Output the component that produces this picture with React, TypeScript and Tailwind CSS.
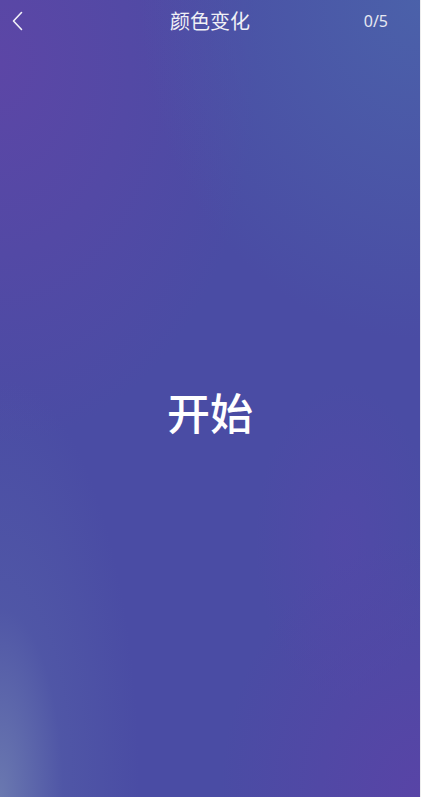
export default function App() {
  return (
    <div className="flex h-[797px] w-[421px] bg-[#ececec] font-['Noto_Sans','Noto_Sans_CJK_SC',sans-serif]">
      <div className="flex h-full w-[420px] flex-col bg-[#4a4ca4] bg-[radial-gradient(ellipse_140px_420px_at_0%_100%,rgba(112,128,178,0.85),rgba(90,105,170,0.35)_45%,transparent),radial-gradient(ellipse_280px_340px_at_100%_0%,rgba(75,98,170,0.95),transparent),radial-gradient(ellipse_260px_380px_at_0%_8%,rgba(92,70,166,1),transparent),radial-gradient(ellipse_200px_260px_at_100%_100%,rgba(88,68,166,1),transparent),radial-gradient(ellipse_90px_160px_at_82%_68%,rgba(84,72,168,0.7),transparent)]">
        <header className="relative flex h-[42px] shrink-0 items-center justify-between pl-[12px] pr-[32px]">
          <button className="flex h-[20px] w-[12px] items-center">
            <svg width="11" height="20" viewBox="0 0 11 20" fill="none">
              <path d="M9.5 1.5L1.5 10L9.5 18.5" stroke="#f2f2f8" strokeWidth="1.6" strokeLinecap="round" strokeLinejoin="round" />
            </svg>
          </button>
          <h1 className="absolute left-1/2 -translate-x-1/2 font-['Noto_Sans_CJK_SC',sans-serif] text-[20px] text-[#f0f0f6]">
            颜色变化
          </h1>
          <span className="text-[16px] text-[#e6e8f2]">0/5</span>
        </header>
        <main className="flex flex-1 items-center justify-center pb-[17px]">
          <span className="font-['Noto_Sans_CJK_SC',sans-serif] text-[43px] font-medium text-white">开始</span>
        </main>
      </div>
    </div>
  )
}
